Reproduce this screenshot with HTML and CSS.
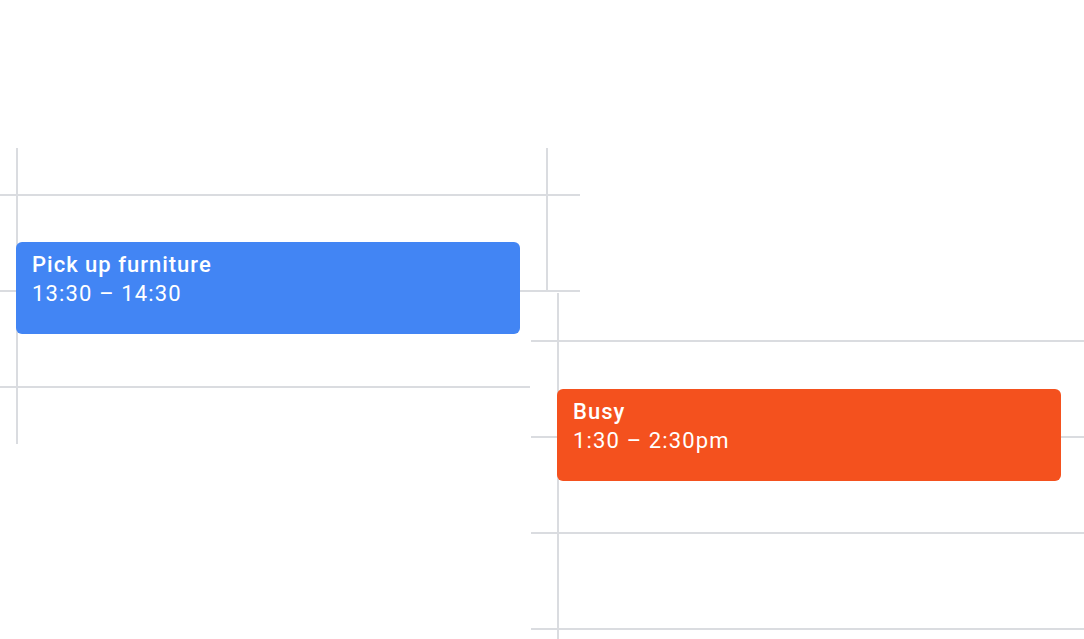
FILE: index.html
```html
<!DOCTYPE html>
<html>
<head>
<meta charset="utf-8">
<link rel="stylesheet" href="styles.css">
</head>
<body>
<div class="canvas">
  <div class="frag frag-a">
    <div class="vline vline-main"></div>
    <div class="vline vline-side"></div>
    <div class="rows">
      <div class="gap first"></div>
      <div class="hline"></div>
      <div class="gap"></div>
      <div class="hline"></div>
      <div class="gap"></div>
      <div class="hline short"></div>
    </div>
    <div class="event event-blue">
      <div class="title">Pick up furniture</div>
      <div class="time">13:30 – 14:30</div>
    </div>
  </div>
  <div class="frag frag-b">
    <div class="vline vline-main"></div>
    <div class="rows">
      <div class="gap first"></div>
      <div class="hline"></div>
      <div class="gap"></div>
      <div class="hline"></div>
      <div class="gap"></div>
      <div class="hline"></div>
      <div class="gap"></div>
      <div class="hline"></div>
    </div>
    <div class="event event-orange">
      <div class="title">Busy</div>
      <div class="time">1:30 – 2:30pm</div>
    </div>
  </div>
</div>
</body>
</html>
```
FILE: styles.css
```css
html, body {
  margin: 0;
  padding: 0;
  background: #ffffff;
  font-family: Roboto, "Liberation Sans", Arial, sans-serif;
}
.canvas {
  display: grid;
  width: 1084px;
  height: 639px;
  overflow: hidden;
}
.frag {
  grid-area: 1 / 1;
  position: relative;
}
.frag-a {
  margin-top: 148px;
  margin-left: 0;
  width: 580px;
  height: 296px;
}
.frag-b {
  margin-top: 293px;
  margin-left: 531px;
  width: 553px;
  height: 346px;
}
.vline {
  position: absolute;
  top: 0;
  width: 2px;
  background: #dadce0;
}
.frag-a .vline-main { left: 16px; height: 296px; }
.frag-a .vline-side { left: 546px; height: 144px; }
.frag-b .vline-main { left: 26px; height: 346px; }
.rows {
  display: flex;
  flex-direction: column;
}
.gap { height: 94px; }
.frag-a .gap.first { height: 46px; }
.frag-b .gap.first { height: 47px; }
.hline {
  height: 2px;
  background: #dadce0;
}
.hline.short { width: 530px; }
.event {
  position: absolute;
  width: 504px;
  height: 92px;
  box-sizing: border-box;
  border-radius: 6px;
  padding: 8px 16px 0 16px;
  color: #ffffff;
  letter-spacing: 1px;
}
.frag-a .event { left: 16px; top: 94px; }
.frag-b .event { left: 26px; top: 96px; }
.event-blue { background: #4285f4; }
.event-orange { background: #f4511e; }
.title {
  font-size: 22px;
  font-weight: 500;
  line-height: 29px;
}
.time {
  font-size: 22px;
  font-weight: 400;
  line-height: 29px;
  letter-spacing: 1.15px;
}
```
